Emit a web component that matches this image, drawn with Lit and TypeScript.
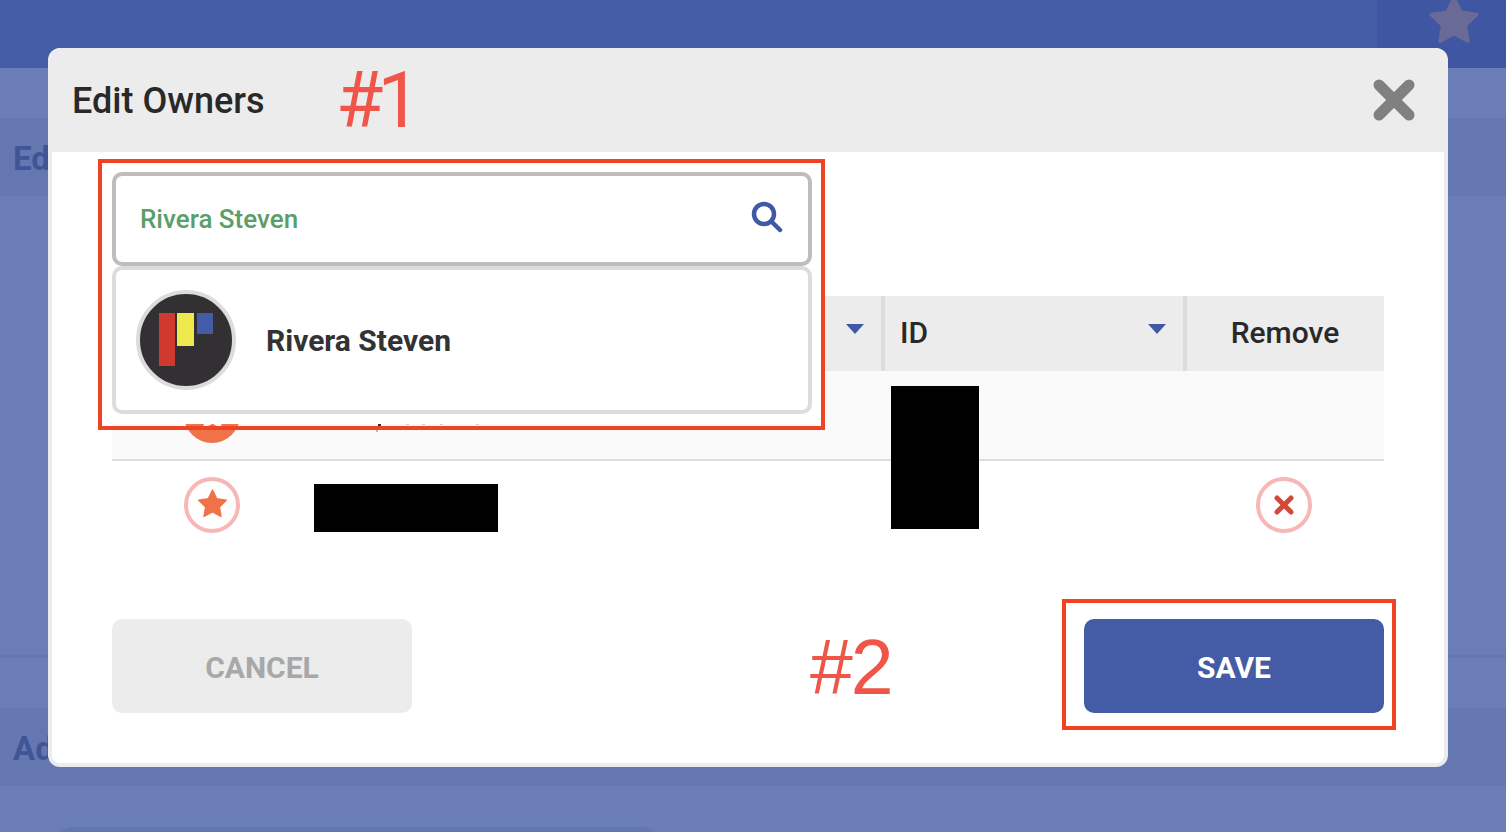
import { LitElement, html, css, svg } from 'lit';
import { customElement } from 'lit/decorators.js';

const STAR = '12 2.8 14.9 8.8 21.4 9.7 16.7 14.3 17.8 20.8 12 17.7 6.2 20.8 7.3 14.3 2.6 9.7 9.1 8.8';

const star = (cls: string) => html`<svg class=${cls} viewBox="0 0 24 24" aria-hidden="true">
  ${svg`<polygon points=${STAR} stroke-linejoin="round"></polygon>`}
</svg>`;

// tops of the row 1 name that stick out under the popover
const CRUMBS = [
  { x: 88, y: 52, w: 3, h: 3, c: '#333' },
  { x: 86, y: 59, w: 2, h: 2, c: '#bbb' },
  { x: 116, y: 53, w: 3, h: 1, c: '#ccc' },
  { x: 132, y: 53, w: 3, h: 1, c: '#ccc' },
  { x: 150, y: 53, w: 3, h: 1, c: '#ccc' },
  { x: 186, y: 53, w: 3, h: 1, c: '#ccc' },
];

@customElement('app-root')
export class AppRoot extends LitElement {
  static styles = css`
    :host {
      display: block;
      position: relative;
      width: 1506px;
      height: 832px;
      overflow: hidden;
      background: #6a7db7;
      font-family: Roboto, 'Liberation Sans', sans-serif;
    }
    .topbar {
      height: 68px;
      display: flex;
      justify-content: flex-end;
      background: #445ca5;
    }
    .topbar-end {
      width: 129px;
      background: #3f57a2;
      display: flex;
      justify-content: center;
    }
    .fav {
      width: 58px;
      height: 58px;
      margin: -9px 0 0 24px;
      fill: #6a6a96;
      stroke: #6a6a96;
      stroke-width: 1.4;
    }
    .gap-top {
      height: 50px;
    }
    .section {
      height: 78px;
      box-sizing: border-box;
      padding: 22px 0 0 13px;
      background: #6577b0;
      color: #3f5597;
      font-size: 33px;
      font-weight: 700;
      line-height: 38px;
    }
    .section-body {
      height: 462px;
      box-sizing: border-box;
      border-bottom: 3px solid #6577b0;
    }
    .gap-mid {
      height: 50px;
    }
    .card {
      width: 595px;
      height: 40px;
      box-sizing: border-box;
      margin: 41px 0 0 60px;
      border-radius: 10px 10px 0 0;
      background: #6377af;
    }
    .modal {
      position: absolute;
      left: 48px;
      top: 48px;
      width: 1400px;
      height: 719px;
      box-sizing: border-box;
      display: flex;
      flex-direction: column;
      border: 4px solid #ececec;
      border-top: 0;
      border-radius: 12px;
      background: #fff;
      overflow: hidden;
    }
    .modal-head {
      flex: none;
      height: 104px;
      box-sizing: border-box;
      margin: 0 -4px;
      padding: 2px 32px 0 24px;
      display: flex;
      align-items: center;
      justify-content: space-between;
      background: #ececec;
    }
    h1 {
      margin: 0;
      font-size: 36px;
      font-weight: 500;
      color: #292929;
    }
    .close {
      width: 44px;
      height: 44px;
      margin-top: -2px;
      stroke: #808080;
      stroke-width: 11;
      stroke-linecap: round;
      fill: none;
    }
    .modal-body {
      flex: 1;
      display: flex;
      flex-direction: column;
      padding: 144px 60px 50px;
    }
    .thead,
    .row {
      display: grid;
      grid-template-columns: 178px 595px 302px 197px;
    }
    .thead {
      height: 75px;
      background: #ececec;
      font-size: 30px;
      font-weight: 500;
      color: #292929;
    }
    .th {
      display: flex;
      align-items: center;
      justify-content: space-between;
      padding: 0 17px 2px 15px;
    }
    .th.name,
    .th.id {
      border-right: 4px solid #dcdcdc;
    }
    .th.remove {
      justify-content: center;
      padding: 0 1px 2px 0;
    }
    .caret {
      width: 18px;
      height: 10px;
      margin-top: -8px;
      fill: #4059a6;
    }
    .row {
      height: 89px;
      align-items: center;
    }
    .row.owner {
      height: 90px;
      box-sizing: border-box;
      background: #fafafa;
      border-bottom: 2px solid #dcdcdc;
    }
    .row.last {
      padding-bottom: 2px;
      box-sizing: border-box;
    }
    .cell-star {
      display: flex;
      justify-content: center;
      padding-left: 22px;
    }
    .cell-name {
      position: relative;
      align-self: stretch;
    }
    .crumb {
      position: absolute;
      display: block;
    }
    .round {
      width: 56px;
      height: 56px;
      box-sizing: border-box;
      display: flex;
      align-items: center;
      justify-content: center;
      border-radius: 50%;
      border: 4px solid #f7b7b5;
      background: #fff;
    }
    .round.on {
      border-color: #f07249;
      background: #f07249;
    }
    .round svg {
      width: 35px;
      height: 35px;
      margin-top: -2px;
    }
    .star-on {
      fill: #f07249;
      stroke: #f07249;
      stroke-width: 1;
    }
    .star-white {
      fill: #fff;
      stroke: #fff;
      stroke-width: 1;
    }
    .cell-remove {
      display: flex;
      justify-content: center;
      padding-right: 3px;
    }
    .x {
      stroke: #d2493a;
      stroke-width: 5;
      stroke-linecap: round;
      fill: none;
    }
    .round .x {
      width: 24px;
      height: 24px;
      margin: 0;
    }
    .actions {
      margin-top: auto;
      display: flex;
      justify-content: space-between;
    }
    button {
      width: 300px;
      height: 94px;
      padding: 3px 0 0;
      border: 0;
      border-radius: 10px;
      font: 700 30px Roboto, 'Liberation Sans', sans-serif;
    }
    .cancel {
      background: #ececec;
      color: #a8a8a8;
    }
    .save {
      background: #445ca5;
      color: #fff;
    }
    .redact {
      position: absolute;
      background: #000;
    }
    .redact.tall {
      left: 839px;
      top: 338px;
      width: 88px;
      height: 143px;
    }
    .redact.wide {
      left: 262px;
      top: 436px;
      width: 184px;
      height: 48px;
    }
    .callout {
      position: absolute;
      box-sizing: border-box;
      border: 4px solid #ee4423;
    }
    .callout.search-box {
      left: 46px;
      top: 111px;
      width: 727px;
      height: 271px;
    }
    .callout.save-box {
      left: 1010px;
      top: 551px;
      width: 334px;
      height: 131px;
    }
    .popover {
      height: 261px;
      box-sizing: border-box;
      padding: 9px 9px 10px 10px;
      background: #fff;
    }
    .search {
      height: 94px;
      box-sizing: border-box;
      display: flex;
      align-items: center;
      justify-content: space-between;
      padding: 0 25px 0 24px;
      border: 4px solid #bdbdbd;
      border-radius: 10px;
      font-size: 26px;
      font-weight: 500;
      color: #5a9e68;
    }
    .search svg {
      width: 32px;
      height: 32px;
      margin-top: -4px;
      stroke: #4059a6;
      stroke-width: 4.5;
      stroke-linecap: round;
      fill: none;
    }
    .result {
      height: 148px;
      box-sizing: border-box;
      display: flex;
      align-items: center;
      gap: 30px;
      padding-left: 20px;
      border: 4px solid #dcdcdc;
      border-radius: 10px;
      font-size: 30px;
      font-weight: 700;
      color: #333;
    }
    .avatar {
      width: 100px;
      height: 100px;
      flex: none;
    }
    .tag {
      position: absolute;
      margin: 0;
      font-family: 'Liberation Sans', sans-serif;
      font-size: 77px;
      line-height: 78px;
      letter-spacing: -2px;
      color: #ef5548;
    }
    /* Liberation's 1 has a foot, the reference's has not */
    .tag.one {
      left: 284px;
      top: 14px;
      font-family: Roboto, sans-serif;
      font-size: 77px;
      letter-spacing: -6px;
    }
    .tag.two {
      left: 758px;
      top: 580px;
    }
  `;

  render() {
    return html`
      <div class="topbar">
        <div class="topbar-end">${star('fav')}</div>
      </div>
      <div class="gap-top"></div>
      <div class="section">Edit</div>
      <div class="section-body"></div>
      <div class="gap-mid"></div>
      <div class="section">Add</div>
      <div class="card"></div>

      <div class="modal">
        <header class="modal-head">
          <h1>Edit Owners</h1>
          <svg class="close" viewBox="0 0 44 44" aria-hidden="true">
            <path d="M7 7 37 37M37 7 7 37"></path>
          </svg>
        </header>
        <div class="modal-body">
          <div class="thead">
            <div class="th"></div>
            <div class="th name">
              <span></span>
              <svg class="caret" viewBox="0 0 18 10"><path d="M0 0h18L9 10z"></path></svg>
            </div>
            <div class="th id">
              <span>ID</span>
              <svg class="caret" viewBox="0 0 18 10"><path d="M0 0h18L9 10z"></path></svg>
            </div>
            <div class="th remove">Remove</div>
          </div>
          <div class="row owner">
            <div class="cell-star">
              <span class="round on">${star('star-white')}</span>
            </div>
            <div class="cell-name">
              ${CRUMBS.map(
                (c) => html`<i
                  class="crumb"
                  style="left:${c.x}px;top:${c.y}px;width:${c.w}px;height:${c.h}px;background:${c.c}"
                ></i>`
              )}
            </div>
            <div></div>
            <div class="cell-remove"></div>
          </div>
          <div class="row last">
            <div class="cell-star">
              <span class="round">${star('star-on')}</span>
            </div>
            <div></div>
            <div></div>
            <div class="cell-remove">
              <span class="round">
                <svg class="x" viewBox="0 0 24 24" aria-hidden="true">
                  <path d="M5 5 19 19M19 5 5 19"></path>
                </svg>
              </span>
            </div>
          </div>
          <div class="actions">
            <button class="cancel">CANCEL</button>
            <button class="save">SAVE</button>
          </div>
        </div>

        <div class="redact tall"></div>
        <div class="redact wide"></div>

        <div class="callout search-box">
          <div class="popover">
            <div class="search">
              <span>Rivera Steven</span>
              <svg viewBox="0 0 32 32" aria-hidden="true">
                <circle cx="13" cy="13" r="10"></circle>
                <path d="M21 21 29 29"></path>
              </svg>
            </div>
            <div class="result">
              <svg class="avatar" viewBox="0 0 100 100" aria-hidden="true">
                <circle cx="50" cy="50" r="48" fill="#323032" stroke="#dcdcdc" stroke-width="4"></circle>
                <rect x="23" y="23" width="16" height="53" fill="#d0392e"></rect>
                <rect x="41" y="23" width="17" height="33" fill="#efe94e"></rect>
                <rect x="61" y="23" width="16" height="21" fill="#445ca5"></rect>
              </svg>
              <span>Rivera Steven</span>
            </div>
          </div>
        </div>
        <div class="callout save-box"></div>

        <p class="tag one">#1</p>
        <p class="tag two">#2</p>
      </div>
    `;
  }
}
